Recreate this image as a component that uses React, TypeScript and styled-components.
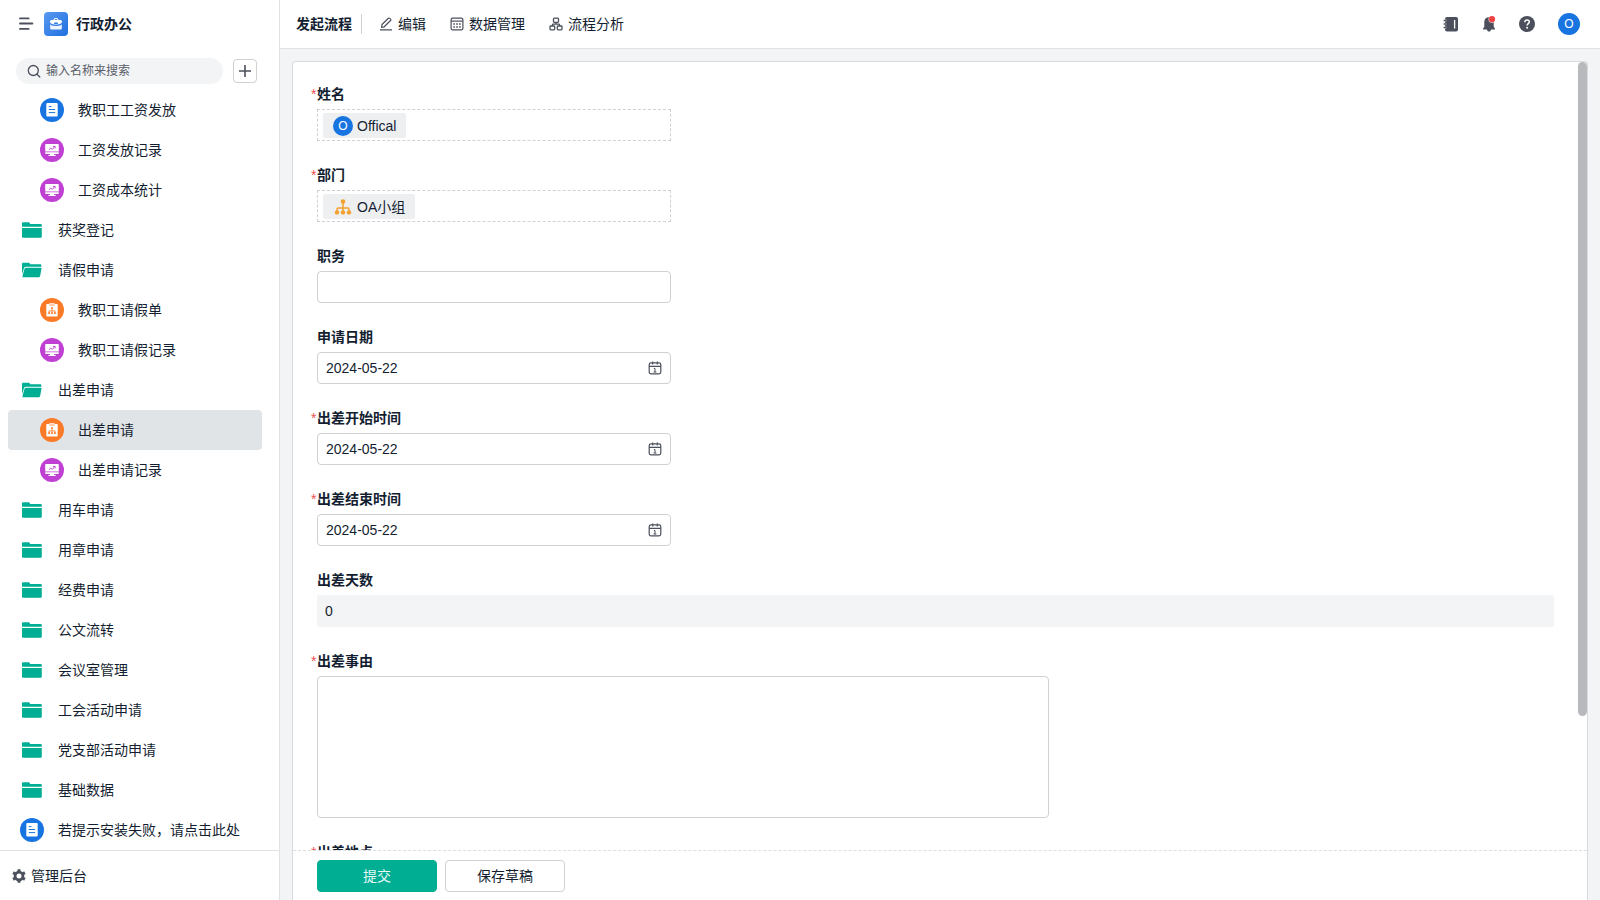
import React, { useState } from 'react';
import styled, { createGlobalStyle, css } from 'styled-components';

const GlobalStyle = createGlobalStyle`
  *, *::before, *::after { box-sizing: border-box; }
  html, body, #root { height: 100%; }
  body {
    margin: 0;
    background: #f2f4f6;
    color: #141e31;
    font: 14px/20px "Liberation Sans", "Noto Sans CJK SC", sans-serif;
  }
  button, input, textarea { font: inherit; color: inherit; }
  button { cursor: pointer; }
  svg { display: block; flex: none; }
`;

const green = '#00ae93';
const blue = '#1874e0';
const border = '#cfd1d4';
const divider = '#e0e2e5';
const iconGrey = '#4b505c';

const Shell = styled.div`
  display: grid;
  grid-template-columns: 280px minmax(0, 1fr);
  height: 100vh;
  overflow: hidden;
`;

const Sidebar = styled.aside`
  display: flex;
  flex-direction: column;
  min-height: 0;
  background: #fff;
  border-right: 1px solid ${divider};
`;

const Brand = styled.div`
  display: flex;
  align-items: center;
  flex: none;
  height: 48px;
  padding-left: 18px;
`;

const IconButton = styled.button`
  display: flex;
  align-items: center;
  justify-content: center;
  padding: 0;
  border: 0;
  background: none;
`;

const BrandLogo = styled.span`
  display: flex;
  align-items: center;
  justify-content: center;
  width: 24px;
  height: 24px;
  margin: 0 8px 0 10px;
  border-radius: 4px;
  background: linear-gradient(135deg, #5a9af0, #1e6fdf);
`;

const BrandName = styled.h1`
  margin: 0;
  font-size: 14px;
  line-height: 20px;
  font-weight: 700;
`;

const SearchRow = styled.div`
  display: flex;
  align-items: center;
  flex: none;
  gap: 10px;
  height: 42px;
  padding: 5px 22px 1px 16px;
`;

const SearchBox = styled.label`
  display: flex;
  align-items: center;
  flex: 1;
  gap: 5px;
  min-width: 0;
  height: 26px;
  padding: 0 12px 0 11px;
  border-radius: 13px;
  background: #f3f4f6;
`;

const SearchInput = styled.input`
  flex: 1;
  min-width: 0;
  padding: 0;
  border: 0;
  outline: 0;
  background: none;
  font-size: 12px;
  &::placeholder { color: #595e69; opacity: 1; }
`;

const AddButton = styled(IconButton)`
  width: 24px;
  height: 24px;
  border: 1px solid ${border};
  border-radius: 4px;
  background: #fff;
`;

const Nav = styled.nav`
  flex: 1;
  min-height: 0;
  overflow-y: auto;
  scrollbar-width: none;
`;

const NavList = styled.ul`
  margin: 0;
  padding: 0 17px 0 8px;
  list-style: none;
`;

const NavLink = styled.a<{ $nested: boolean; $active: boolean }>`
  display: flex;
  align-items: center;
  gap: 14px;
  height: 40px;
  padding-left: ${(p) => (p.$nested ? 32 : 12)}px;
  border-radius: 4px;
  color: inherit;
  text-decoration: none;
  ${(p) => p.$active && css`background: #e1e4e7;`}
`;

const AdminLink = styled.a`
  display: flex;
  align-items: center;
  flex: none;
  gap: 5px;
  height: 50px;
  padding-left: 12px;
  border-top: 1px solid ${divider};
  color: inherit;
  text-decoration: none;
`;

const Main = styled.main`
  display: flex;
  flex-direction: column;
  min-width: 0;
  min-height: 0;
`;

const TopBar = styled.header`
  display: flex;
  align-items: center;
  justify-content: space-between;
  flex: none;
  height: 49px;
  padding: 0 19px 0 16px;
  border-bottom: 1px solid ${divider};
  background: #fff;
`;

const Tabs = styled.nav`
  display: flex;
  align-items: center;
  gap: 24px;
`;

const CurrentTab = styled.a`
  padding-right: 9px;
  margin-right: -7px;
  border-right: 1px solid ${border};
  color: inherit;
  font-weight: 700;
  text-decoration: none;
`;

const Tab = styled.a`
  display: flex;
  align-items: center;
  gap: 5px;
  color: inherit;
  text-decoration: none;
`;

const Tools = styled.div`
  display: flex;
  align-items: center;
  gap: 22px;
`;

const AccountButton = styled(IconButton)`
  width: 24px;
  height: 24px;
`;

const Avatar = styled.span<{ $size: number }>`
  display: flex;
  align-items: center;
  justify-content: center;
  flex: none;
  width: ${(p) => p.$size}px;
  height: ${(p) => p.$size}px;
  border-radius: 50%;
  background: ${blue};
  color: #fff;
  font-size: 12px;
`;

const Card = styled.form`
  display: flex;
  flex-direction: column;
  flex: 1;
  min-height: 0;
  margin: 12px 12px 0;
  border: 1px solid #d8dadd;
  border-bottom: 0;
  border-radius: 4px 4px 0 0;
  background: #fff;
`;

const ScrollFrame = styled.div`
  position: relative;
  flex: 1;
  min-height: 0;
`;

const Fields = styled.div`
  display: flex;
  flex-direction: column;
  gap: 24px;
  height: 100%;
  padding: 22px 33px 24px 24px;
  overflow-y: auto;
  scrollbar-width: none;
`;

const ScrollThumb = styled.div`
  position: absolute;
  top: 0;
  right: 0;
  width: 9px;
  height: 83%;
  border-radius: 5px;
  background: #b7b9bc;
`;

const Field = styled.div`
  display: flex;
  flex-direction: column;
  flex: none;
  gap: 5px;
`;

const FieldLabel = styled.label<{ $required?: boolean }>`
  position: relative;
  font-weight: 700;
  line-height: 20px;
  ${(p) => p.$required && css`
    &::before {
      content: "*";
      position: absolute;
      left: -6px;
      color: #ee4f51;
      font-weight: 400;
    }
  `}
`;

const MemberBox = styled.div`
  display: flex;
  align-items: center;
  max-width: 354px;
  height: 32px;
  padding: 1px 5px 0;
  border: 1px dashed ${border};
`;

const Member = styled.span`
  display: flex;
  align-items: center;
  gap: 4px;
  height: 25px;
  padding: 1px 10px 0;
  border-radius: 2px;
  background: #eeeff1;
`;

const Control = styled.div`
  display: flex;
  align-items: center;
  max-width: 354px;
  height: 32px;
  padding: 0 8px;
  border: 1px solid ${border};
  border-radius: 4px;
`;

const TextInput = styled.input`
  flex: 1;
  min-width: 0;
  padding: 0;
  border: 0;
  outline: 0;
  background: none;
`;

const ReadonlyInput = styled.input`
  width: 100%;
  height: 32px;
  padding: 0 8px;
  border: 0;
  border-radius: 2px;
  outline: 0;
  background: #f3f4f6;
`;

const TextArea = styled.textarea`
  width: 100%;
  max-width: 732px;
  height: 142px;
  padding: 6px 8px;
  border: 1px solid ${border};
  border-radius: 4px;
  outline: 0;
  resize: none;
`;

const Actions = styled.footer`
  display: flex;
  flex: none;
  gap: 8px;
  height: 50px;
  padding: 9px 24px;
  border-top: 1px dashed #dcdee0;
`;

const ActionButton = styled.button<{ $primary?: boolean }>`
  width: 120px;
  height: 32px;
  padding: 0;
  border: 1px solid ${(p) => (p.$primary ? green : border)};
  border-radius: 4px;
  background: ${(p) => (p.$primary ? green : '#fff')};
  color: ${(p) => (p.$primary ? '#e6f9f5' : 'inherit')};
`;

const MenuIcon = () => (
  <svg width="16" height="16" fill="none" stroke={iconGrey} strokeWidth="1.9" strokeLinecap="round">
    <path d="M2 2.400h8.600M2 7.500h12.400M2 12.900h8.600" />
  </svg>
);

const BriefcaseIcon = () => (
  <svg width="14" height="14">
    <path d="M4.800 3.300C5 2 5.700 1.500 7 1.500s2 .5 2.200 1.800" fill="none" stroke="#fff" strokeWidth="1.100" />
    <path d="M2.600 2.900h8.800c1 0 1.600.8 1.600 1.700 0 1.700-1.800 2.700-4.200 2.900H5.200C2.800 7.300 1 6.300 1 4.600c0-.9.6-1.700 1.600-1.700z" fill="#fff" />
    <path d="M1.200 7.400c1.500 1.200 3.500 1.500 5.800 1.500s4.300-.3 5.800-1.500v3.800c0 .8-.5 1.300-1.300 1.300h-9c-.8 0-1.300-.5-1.300-1.300z" fill="#fff" opacity=".92" />
    <rect x="5" y="5.600" width="4" height="1.300" rx=".6" fill="#2b7be5" />
  </svg>
);

const SearchIcon = () => (
  <svg width="14" height="14" fill="none" stroke={iconGrey} strokeWidth="1.300" strokeLinecap="round">
    <circle cx="6.300" cy="6.500" r="5" />
    <path d="M10 10.300l2.800 2.700" />
  </svg>
);

const PlusIcon = () => (
  <svg width="14" height="14" stroke={iconGrey} strokeWidth="1.600">
    <path d="M7 1v12M1 7h12" />
  </svg>
);

const FolderIcon = () => (
  <svg width="24" height="24" fill={green}>
    <path d="M2 8.800V5.600c0-.8.500-1.300 1.300-1.300h5.400c.5 0 .8.200 1 .6l.6 1.200h10.200c.8 0 1.300.500 1.300 1.300v1.400z" />
    <path d="M2 9.900h19.800v8.600c0 .8-.5 1.300-1.300 1.300H3.300c-.8 0-1.300-.5-1.300-1.300z" />
  </svg>
);

const FolderOpenIcon = () => (
  <svg width="24" height="24" fill={green}>
    <path d="M2 16V6c0-.8.500-1.300 1.300-1.300h5.400c.5 0 .8.200 1 .6l.6 1h9.800c.8 0 1.300.5 1.300 1.300v1.200H5.800c-.9 0-1.500.4-1.800 1.200z" />
    <path d="M6 9.700h14.600c.7 0 1 .5.900 1.100l-1.400 7.200c-.2.800-.6 1.200-1.400 1.200H3.500c-.8 0-1.200-.5-1-1.300l2-7.200c.2-.7.700-1 1.500-1z" />
  </svg>
);

const DocIcon = () => (
  <svg width="24" height="24" fill="none">
    <circle cx="12" cy="12" r="12" fill={blue} />
    <rect x="6.300" y="5" width="11.400" height="13.600" rx="1" fill="#fff" />
    <path d="M8.800 8.600h2.600M8.800 11.500h6.200M8.800 14.600h6.400" stroke={blue} strokeWidth="1" />
  </svg>
);

const ChartIcon = () => (
  <svg width="24" height="24" fill="none">
    <circle cx="12" cy="12" r="12" fill="#c040d4" />
    <path d="M6.200 6h11.600c.6 0 1 .4 1 1v6.600H5.200V7c0-.6.400-1 1-1zM5.200 14.300h13.600v.8c0 .6-.4 1-1 1h-3.600v.9h1.500v1H8.500v-1H10v-.9H6.200c-.6 0-1-.4-1-1z" fill="#fff" />
    <path d="M9 11.700l1.800-1.700 1.500 1.300 2.500-2.600M13 8.400h2.100v2.100" stroke="#c040d4" strokeWidth=".9" />
  </svg>
);

const FlowFormIcon = () => (
  <svg width="24" height="24" fill="none">
    <circle cx="12" cy="12" r="12" fill="#fb7a27" />
    <path d="M7.300 6h2V5.200h5.400V6h2c.6 0 1 .4 1 1v10.600c0 .6-.4 1-1 1H7.300c-.6 0-1-.4-1-1V7c0-.6.4-1 1-1z" fill="#fff" />
    <path d="M9.500 7h5" stroke="#fb7a27" strokeWidth=".8" />
    <path d="M12 10.500v4M9 14.800v-1.900h6v1.900" stroke="#fb7a27" strokeWidth=".8" />
    <path d="M11.100 9.300h1.800v1.700h-1.800zM8.200 14.300h1.700V16H8.200zM11.150 14.300h1.700V16h-1.700zM14.100 14.300h1.700V16h-1.700z" fill="#fb7a27" />
  </svg>
);

const GearIcon = () => (
  <svg width="14" height="14" fill="none" stroke={iconGrey}>
    <circle cx="7" cy="7" r="3.900" strokeWidth="2.800" />
    <path d="M7 .2v2.200M7 11.600v2.200M1.100 3.600L3 4.700M11 9.300l1.900 1.100M1.100 10.400L3 9.300M11 4.700l1.900-1.100" strokeWidth="3" />
  </svg>
);

const PencilIcon = () => (
  <svg width="14" height="14" fill="none" stroke={iconGrey} strokeWidth="1.200" strokeLinejoin="round">
    <path d="M2.600 10.300l.4-2.800 6.400-6.200c.4-.4 1-.4 1.400 0l.8.800c.4.400.4 1 0 1.400L5.200 9.800zM1 12.900h12" />
  </svg>
);

const DataIcon = () => (
  <svg width="14" height="14" fill="none" stroke={iconGrey} strokeWidth="1.200">
    <rect x="1.100" y="1.100" width="11.800" height="11.800" rx="1.600" />
    <path d="M1 4.100h12" />
    <path d="M3.300 7h1.600M6.200 7h1.600M9.100 7h1.600M3.300 10h1.600M6.200 10h1.600M9.100 10h1.600" strokeWidth="1.700" />
  </svg>
);

const FlowIcon = () => (
  <svg width="14" height="14" fill="none" stroke={iconGrey} strokeWidth="1.300">
    <rect x="4.500" y="1.200" width="5" height="4.100" rx=".8" />
    <rect x="1" y="9" width="4.700" height="3.800" rx=".8" />
    <rect x="8.300" y="9" width="4.700" height="3.800" rx=".8" />
    <path d="M7 5.300v1.800M3.400 9V7.900c0-.5.300-.8.800-.8h5.600c.5 0 .8.300.8.800V9" />
  </svg>
);

const NotebookIcon = () => (
  <svg width="16" height="16" fill="none">
    <rect x="2" y="1" width="13" height="14.500" rx="2" fill={iconGrey} />
    <path d="M.8 4.500h2.600M.8 8h2.600M.8 11.500h2.600" stroke="#fff" strokeWidth="2" />
    <path d="M.6 4.500h3M.6 8h3M.6 11.500h3" stroke={iconGrey} strokeWidth="1.300" />
    <path d="M11.600 4v8.500" stroke="#fff" strokeWidth="1.300" />
  </svg>
);

const BellIcon = () => (
  <svg width="16" height="16">
    <path d="M8 1.300c3 0 4.700 2 4.700 4.700v4.500l1.300 2.200c.2.500 0 .8-.5.800h-11c-.5 0-.7-.3-.5-.8l1.300-2.200V6C3.300 3.300 5 1.300 8 1.300z" fill={iconGrey} />
    <path d="M5.800 13h4.400c-.3 1.800-1.200 2.600-2.200 2.600s-1.900-.8-2.200-2.600z" fill={iconGrey} />
    <circle cx="11" cy="3.200" r="3.500" fill="#fff" />
    <circle cx="11" cy="3.200" r="3.100" fill="#f04346" />
  </svg>
);

const HelpIcon = () => (
  <svg width="16" height="16" fill="none">
    <circle cx="8" cy="8" r="8" fill={iconGrey} />
    <path d="M5.800 6.200c0-1.400.9-2.200 2.200-2.200s2.300.8 2.300 2c0 1.600-2.200 1.700-2.200 3.400" stroke="#fff" strokeWidth="1.500" />
    <circle cx="8.100" cy="11.700" r=".95" fill="#fff" />
  </svg>
);

const DepartmentIcon = () => (
  <svg width="20" height="20" fill="none" stroke="#f2a12e" strokeWidth="1.500">
    <path d="M10 4v11M4 15v-2.800c0-.8.500-1.300 1.300-1.300h9.400c.8 0 1.300.5 1.300 1.300V15" />
    <g fill="#f2a12e" stroke="none">
      <circle cx="10" cy="4.600" r="2.300" />
      <circle cx="4" cy="15.400" r="2.200" />
      <circle cx="10" cy="15.400" r="2.200" />
      <circle cx="16" cy="15.400" r="2.200" />
    </g>
  </svg>
);

const CalendarIcon = () => (
  <svg width="14" height="14" fill="none" stroke={iconGrey} strokeWidth="1.200">
    <rect x="1.200" y="1.900" width="11.600" height="10.900" rx="1.800" />
    <path d="M1 5.400h12M4.700.6v3M9.300.6v3" />
    <path d="M5.900 7.500H7v3.700M5.600 11h2.800" strokeWidth="1" />
  </svg>
);

const icons = {
  doc: DocIcon,
  chart: ChartIcon,
  flow: FlowFormIcon,
  folder: FolderIcon,
  open: FolderOpenIcon,
};

type NavItem = { text: string; icon: keyof typeof icons; nested?: boolean; active?: boolean };

const navItems: NavItem[] = [
  { text: '教职工工资发放', icon: 'doc', nested: true },
  { text: '工资发放记录', icon: 'chart', nested: true },
  { text: '工资成本统计', icon: 'chart', nested: true },
  { text: '获奖登记', icon: 'folder' },
  { text: '请假申请', icon: 'open' },
  { text: '教职工请假单', icon: 'flow', nested: true },
  { text: '教职工请假记录', icon: 'chart', nested: true },
  { text: '出差申请', icon: 'open' },
  { text: '出差申请', icon: 'flow', nested: true, active: true },
  { text: '出差申请记录', icon: 'chart', nested: true },
  { text: '用车申请', icon: 'folder' },
  { text: '用章申请', icon: 'folder' },
  { text: '经费申请', icon: 'folder' },
  { text: '公文流转', icon: 'folder' },
  { text: '会议室管理', icon: 'folder' },
  { text: '工会活动申请', icon: 'folder' },
  { text: '党支部活动申请', icon: 'folder' },
  { text: '基础数据', icon: 'folder' },
  { text: '若提示安装失败，请点击此处', icon: 'doc' },
];

function DateField({ id, label, required }: { id: string; label: string; required?: boolean }) {
  const [value, setValue] = useState('2024-05-22');
  return (
    <Field>
      <FieldLabel htmlFor={id} $required={required}>{label}</FieldLabel>
      <Control>
        <TextInput id={id} value={value} onChange={(e) => setValue(e.target.value)} />
        <CalendarIcon />
      </Control>
    </Field>
  );
}

export default function App() {
  return (
    <>
      <GlobalStyle />
      <Shell>
        <Sidebar>
          <Brand>
            <IconButton type="button" aria-label="收起菜单"><MenuIcon /></IconButton>
            <BrandLogo><BriefcaseIcon /></BrandLogo>
            <BrandName>行政办公</BrandName>
          </Brand>
          <SearchRow>
            <SearchBox>
              <SearchIcon />
              <SearchInput placeholder="输入名称来搜索" aria-label="搜索" />
            </SearchBox>
            <AddButton type="button" aria-label="新建"><PlusIcon /></AddButton>
          </SearchRow>
          <Nav>
            <NavList>
              {navItems.map((item, i) => {
                const Icon = icons[item.icon];
                return (
                  <li key={i}>
                    <NavLink
                      href="#"
                      $nested={!!item.nested}
                      $active={!!item.active}
                      aria-current={item.active ? 'page' : undefined}
                    >
                      <Icon />
                      {item.text}
                    </NavLink>
                  </li>
                );
              })}
            </NavList>
          </Nav>
          <AdminLink href="#"><GearIcon />管理后台</AdminLink>
        </Sidebar>
        <Main>
          <TopBar>
            <Tabs>
              <CurrentTab href="#">发起流程</CurrentTab>
              <Tab href="#"><PencilIcon />编辑</Tab>
              <Tab href="#"><DataIcon />数据管理</Tab>
              <Tab href="#"><FlowIcon />流程分析</Tab>
            </Tabs>
            <Tools>
              <IconButton type="button" aria-label="通讯录"><NotebookIcon /></IconButton>
              <IconButton type="button" aria-label="消息"><BellIcon /></IconButton>
              <IconButton type="button" aria-label="帮助"><HelpIcon /></IconButton>
              <AccountButton type="button" aria-label="账号"><Avatar $size={22}>O</Avatar></AccountButton>
            </Tools>
          </TopBar>
          <Card onSubmit={(e) => e.preventDefault()}>
            <ScrollFrame>
              <Fields>
                <Field>
                  <FieldLabel as="span" $required>姓名</FieldLabel>
                  <MemberBox><Member><Avatar $size={20}>O</Avatar>Offical</Member></MemberBox>
                </Field>
                <Field>
                  <FieldLabel as="span" $required>部门</FieldLabel>
                  <MemberBox><Member><DepartmentIcon />OA小组</Member></MemberBox>
                </Field>
                <Field>
                  <FieldLabel htmlFor="post">职务</FieldLabel>
                  <Control><TextInput id="post" /></Control>
                </Field>
                <DateField id="apply-date" label="申请日期" />
                <DateField id="start-date" label="出差开始时间" required />
                <DateField id="end-date" label="出差结束时间" required />
                <Field>
                  <FieldLabel htmlFor="days">出差天数</FieldLabel>
                  <ReadonlyInput id="days" value="0" readOnly />
                </Field>
                <Field>
                  <FieldLabel htmlFor="reason" $required>出差事由</FieldLabel>
                  <TextArea id="reason" />
                </Field>
                <Field>
                  <FieldLabel htmlFor="place" $required>出差地点</FieldLabel>
                  <Control><TextInput id="place" /></Control>
                </Field>
              </Fields>
              <ScrollThumb />
            </ScrollFrame>
            <Actions>
              <ActionButton type="submit" $primary>提交</ActionButton>
              <ActionButton type="button">保存草稿</ActionButton>
            </Actions>
          </Card>
        </Main>
      </Shell>
    </>
  );
}
